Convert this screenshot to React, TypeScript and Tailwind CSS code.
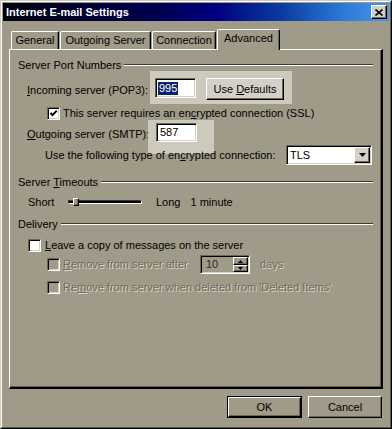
import type { ReactElement, ReactNode } from "react";

// Win2k-style "Internet E-mail Settings" dialog, Advanced tab

const sunken =
  "border border-t-[#6b6657] border-l-[#6b6657] border-r-white border-b-white shadow-[inset_1px_1px_0_#000,inset_-1px_-1px_0_#d4d0c8]";
const raised =
  "border border-t-white border-l-white border-r-black border-b-black shadow-[inset_-1px_-1px_0_#6b6657]";

function GroupHeader({ children }: { children: ReactNode }): ReactElement {
  return (
    <div className="flex h-[14px] items-center gap-[3px] pl-[8px] pr-[8px]">
      <span className="whitespace-nowrap leading-[14px]">{children}</span>
      <div className="h-[2px] flex-1 border-t border-b border-t-[#3a382f] border-b-white" />
    </div>
  );
}

function CheckBox({ checked, disabled }: { checked?: boolean; disabled?: boolean }): ReactElement {
  return (
    <div
      className={`flex h-[13px] w-[13px] shrink-0 items-center justify-center ${sunken} ${
        disabled ? "bg-[#a09a88]" : "bg-white"
      }`}
    >
      {checked && (
        <svg width="9" height="9" viewBox="0 0 9 9">
          <polyline points="1.5,4 3.5,6.2 7.8,1.6" fill="none" stroke="#000" strokeWidth="1.9" />
        </svg>
      )}
    </div>
  );
}

function Tab({ label, width, selected }: { label: string; width: string; selected?: boolean }): ReactElement {
  return (
    <div
      className={`flex items-center justify-center rounded-t-[2px] border-t border-l border-r border-t-white border-l-white border-r-black shadow-[inset_-1px_0_0_#6b6657] bg-[#a09a88] ${width} ${
        selected ? "relative z-10 -mb-px h-[21px] pb-[3px]" : "h-[18px]"
      }`}
    >
      {label}
    </div>
  );
}

export default function App(): ReactElement {
  const disabledText = "text-[#6f6a5b] [text-shadow:1px_1px_0_#dcd8cc]";

  return (
    <div className="h-[429px] w-[392px] border border-t-[#cfcabd] border-l-[#cfcabd] border-r-black border-b-black bg-[#a09a88] font-['Liberation_Sans',Arial,sans-serif] text-[11px] text-black">
      <div className="flex h-full flex-col border border-t-white border-l-white border-r-[#5e594b] border-b-[#5e594b] p-px">
        {/* title bar */}
        <div className="flex h-[18px] items-center justify-between bg-[linear-gradient(to_right,#000010_0%,#000050_40%,#000080_55%,#0b3aa0_72%,#2a7ad8_88%,#4a95e5_100%)] pl-[3px] pr-[2px]">
          <span className="font-bold text-white">Internet E-mail Settings</span>
          <div className={`flex h-[14px] w-[16px] items-center justify-center bg-[#d4d0c8] ${raised}`}>
            <svg width="8" height="7" viewBox="0 0 8 7">
              <path d="M0.5 0.5 L7.5 6.5 M7.5 0.5 L0.5 6.5" stroke="#000" strokeWidth="1.6" />
            </svg>
          </div>
        </div>

        <div className="flex flex-1 flex-col px-[6px]">
          {/* tabs */}
          <div className="mt-[8px] flex h-[20px] items-end pl-[2px]">
            <Tab label="General" width="w-[48px]" />
            <Tab label="Outgoing Server" width="w-[91px] ml-px" />
            <Tab label="Connection" width="w-[64px] ml-px" />
            <Tab label="Advanced" width="w-[63px] ml-px" selected />
          </div>

          {/* panel */}
          <div className="flex h-[340px] flex-col border-t border-l border-r-2 border-b-2 border-t-white border-l-white border-r-black border-b-black shadow-[inset_-1px_-1px_0_#5e594b]">
            <div className="mt-[8px]">
              <GroupHeader>Server Port Numbers</GroupHeader>
            </div>

            {/* incoming */}
            <div className="-mt-px flex items-start pl-[17px]">
              <span className="mt-[12px] w-[123px] whitespace-nowrap leading-[14px]">
                <u>I</u>ncoming server (POP3):
              </span>
              <div className="flex items-start gap-[10px] bg-[#cdc9bd] pt-[7px] pr-[8px] pb-[4px] pl-[5px]">
                <div className={`flex h-[20px] w-[41px] items-center bg-white pl-[2px] ${sunken}`}>
                  <span className="bg-[#0a246a] px-px leading-[13px] text-white">995</span>
                </div>
                <div className={`flex h-[22px] w-[78px] items-center justify-center bg-[#d4d0c8] ${raised}`}>
                  <span className="whitespace-nowrap">
                    Use <u>D</u>efaults
                  </span>
                </div>
              </div>
            </div>

            {/* ssl */}
            <div className="flex h-[18px] items-center gap-[3px] pl-[37px]">
              <CheckBox checked />
              <span className="whitespace-nowrap">
                This server requires an en<u>c</u>rypted connection (SSL)
              </span>
            </div>

            {/* outgoing */}
            <div className="flex h-[21px] items-start pl-[17px]">
              <span className="mt-[5px] w-[121px] whitespace-nowrap leading-[14px]">
                <u>O</u>utgoing server (SMTP):
              </span>
              <div className="-mt-[2px] bg-[#cdc9bd] pt-[3px] pr-[17px] pb-[12px] pl-[8px]">
                <div className={`flex h-[19px] w-[41px] items-center bg-white pl-[3px] ${sunken}`}>587</div>
              </div>
            </div>

            {/* encryption type */}
            <div className="relative flex h-[24px] items-center pl-[35px]">
              <span className="w-[241px] whitespace-nowrap">
                Use the following type of en<u>c</u>rypted connection:
              </span>
              <div className={`flex h-[20px] w-[86px] items-center justify-between bg-white pl-[3px] pr-px ${sunken}`}>
                <span>TLS</span>
                <div className={`flex h-[16px] w-[16px] items-center justify-center bg-[#d4d0c8] ${raised}`}>
                  <svg width="7" height="4" viewBox="0 0 7 4">
                    <path d="M0 0 H7 L3.5 4 Z" fill="#000" />
                  </svg>
                </div>
              </div>
            </div>

            <div className="mt-[8px]">
              <GroupHeader>
                Server <u>T</u>imeouts
              </GroupHeader>
            </div>

            {/* timeout slider */}
            <div className="mt-[6px] flex h-[14px] items-center pl-[18px]">
              <span className="w-[40px]">Short</span>
              <div className="relative h-[4px] w-[74px] border border-t-[#3a382f] border-l-[#3a382f] border-r-white border-b-white bg-black">
                <div className={`absolute -top-[3px] left-[4px] h-[8px] w-[6px] bg-[#a09a88] ${raised}`} />
              </div>
              <span className="ml-[14px]">Long</span>
              <span className="ml-[10px]">1 minute</span>
            </div>

            <div className="mt-[8px]">
              <GroupHeader>Delivery</GroupHeader>
            </div>

            {/* leave copy */}
            <div className="mt-[7px] flex h-[14px] items-center gap-[4px] pl-[18px]">
              <CheckBox />
              <span className="whitespace-nowrap">
                <u>L</u>eave a copy of messages on the server
              </span>
            </div>

            {/* remove after */}
            <div className="mt-[2px] flex h-[21px] items-center pl-[37px]">
              <CheckBox disabled />
              <span className={`ml-[3px] w-[137px] whitespace-nowrap ${disabledText}`}>
                <u>R</u>emove from server after
              </span>
              <div className={`flex h-[19px] w-[50px] items-center justify-between bg-[#a09a88] pl-[5px] pr-px ${sunken}`}>
                <span className="text-[#2a2820]">10</span>
                <div className="flex h-[15px] w-[15px] flex-col">
                  <div className={`flex h-[8px] items-center justify-center bg-[#a09a88] ${raised}`}>
                    <svg width="5" height="3" viewBox="0 0 5 3">
                      <path d="M0 3 H5 L2.5 0 Z" fill="#000" />
                    </svg>
                  </div>
                  <div className={`flex h-[7px] items-center justify-center bg-[#a09a88] ${raised}`}>
                    <svg width="5" height="3" viewBox="0 0 5 3">
                      <path d="M0 0 H5 L2.5 3 Z" fill="#000" />
                    </svg>
                  </div>
                </div>
              </div>
              <span className={`ml-[10px] ${disabledText}`}>days</span>
            </div>

            {/* remove when deleted */}
            <div className="mt-[5px] flex h-[14px] items-center gap-[3px] pl-[37px]">
              <CheckBox disabled />
              <span className={`whitespace-nowrap ${disabledText}`}>
                Re<u>m</u>ove from server when deleted from 'Deleted Items'
              </span>
            </div>
          </div>

          {/* buttons */}
          <div className="mt-[7px] flex justify-end gap-[6px] pr-px">
            <div className="h-[22px] w-[75px] border border-black">
              <div className={`flex h-full w-full items-center justify-center ${raised}`}>OK</div>
            </div>
            <div className={`flex h-[22px] w-[74px] items-center justify-center ${raised}`}>Cancel</div>
          </div>
        </div>
      </div>
    </div>
  );
}
